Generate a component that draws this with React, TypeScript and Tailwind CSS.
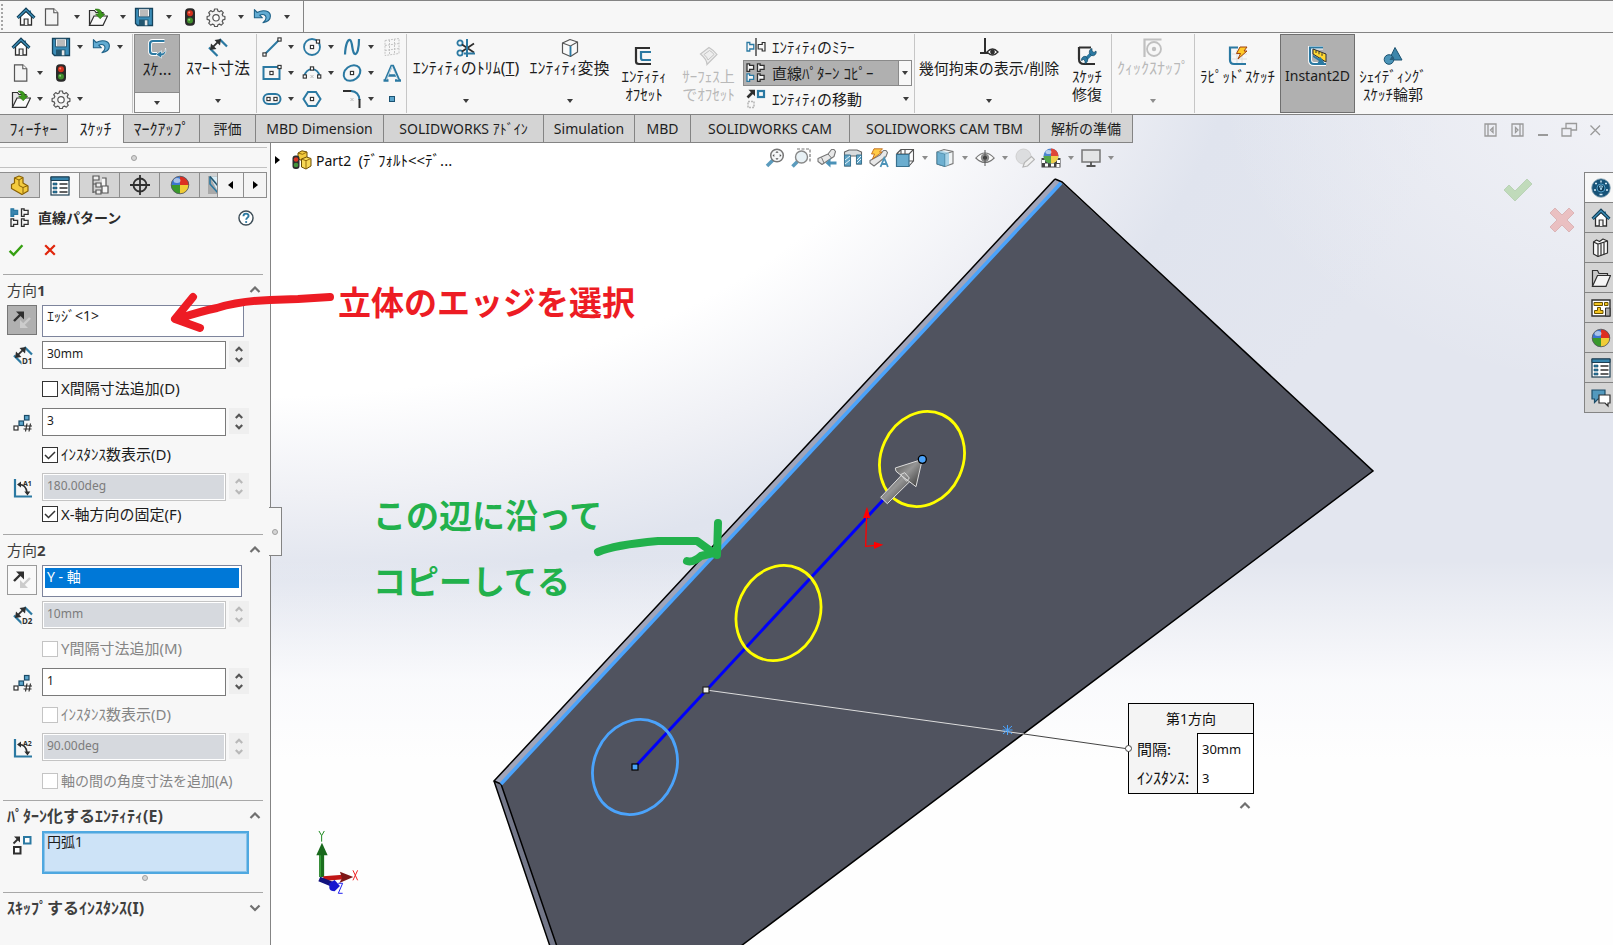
import React, { useId } from "react";

type Kids = { children?: React.ReactNode };

/* ---------- icon primitives ---------- */

function Ic({ children, size = "size-5" }: Kids & { size?: string }) {
  return (
    <svg viewBox="0 0 20 20" className={`${size} shrink-0`} fill="none" aria-hidden="true">
      {children}
    </svg>
  );
}

const B = "#2b79a2";
const K = "#2f2f2f";

const Home = () => (
  <Ic>
    <path d="M4.5 9.5V18h11V9.5L10 4.5z" fill="#fff" stroke={K} strokeWidth="1.3" />
    <path d="M8.2 18v-6h3.8v6" fill="#f2f2f2" stroke={K} strokeWidth="1.2" />
    <path d="M14.2 3.5v3" stroke={B} strokeWidth="1.6" />
    <path d="M1.6 10.8 10 2.6l8.4 8.2" stroke="#123f58" strokeWidth="3.2" />
    <path d="M2 10.6 10 2.9l8 7.7" stroke="#3f93bd" strokeWidth="1.3" />
  </Ic>
);
const Doc = () => (
  <Ic>
    <path d="M3.5 1.8h8.3l4 4v12.4H3.5z" fill="#f4f4f4" stroke="#555" strokeWidth="1.2" />
    <path d="M11.8 1.8v4h4" fill="#fff" stroke="#555" strokeWidth="1.1" />
  </Ic>
);
const OpenFolder = () => (
  <Ic>
    <path d="M1.5 18V3.5h5l1.5 2h7V8" fill="#e6e6e6" stroke={K} strokeWidth="1.2" />
    <path d="M1.5 18.3 6 9h13.5L15 18.3z" fill="#fafafa" stroke={K} strokeWidth="1.2" />
    <path d="M7 2.2c4-.6 6.8.8 7.2 4.8h2.6l-4.6 4.8L7.6 7h2.8c.2-2-1-3.4-3.4-4.8z" fill="#3c9a1c" stroke="#246b0c" strokeWidth=".6" />
  </Ic>
);
const Save = () => (
  <Ic>
    <path d="M1.5 1.5h17v17h-15l-2-2z" fill="#3b8db8" stroke="#16435c" strokeWidth="1.3" />
    <path d="M4.5 1.8h11v8h-11z" fill="#f5f5f5" stroke="#16435c" strokeWidth=".8" />
    <path d="M6 4h8M6 6h8M6 8h8" stroke="#777" strokeWidth=".9" />
    <path d="M5 12.5h9.5v6H5z" fill="#23566f" />
    <path d="M10.8 13.3h2.6v5h-2.6z" fill="#e8e8e8" />
  </Ic>
);
const Traffic = () => (
  <Ic>
    <rect x="5" y="1.3" width="10" height="17.4" rx="4" fill="#2a2a2a" />
    <circle cx="10" cy="6.2" r="3" fill="#d2301d" />
    <circle cx="9.2" cy="5.4" r="1" fill="#ff8a76" />
    <circle cx="10" cy="13.6" r="3" fill="#3f8d2c" />
    <circle cx="9.2" cy="12.8" r="1" fill="#9ad486" />
  </Ic>
);
const Gear = () => (
  <Ic>
    <path
      d="M8.6 2h2.8l.5 2 1.6.7 1.8-1.1 2 2-1.1 1.8.7 1.6 2 .5v2.8l-2 .5-.7 1.6 1.1 1.8-2 2-1.8-1.1-1.6.7-.5 1.7H8.6l-.5-1.7-1.6-.7-1.8 1.1-2-2 1.1-1.8-.7-1.6-2-.5V9.5l2-.5.7-1.6-1.1-1.8 2-2 1.8 1.1L8.1 4z"
      fill="#f4f4f4" stroke="#555" strokeWidth="1.2" strokeLinejoin="round" />
    <circle cx="10" cy="10.8" r="3.2" fill="#fff" stroke="#555" strokeWidth="1.2" />
  </Ic>
);
const Undo = () => (
  <Ic>
    <path d="M2.4 2.6v8.2h8L7.7 8.2c3-1.6 6.6-.3 6.3 2.8-.1 1.9-1.3 3.4-3 4.6 4.2-.6 7.4-3 7.4-6.6C18.4 4 11.4 2 5.2 5.5z" fill="#62abd2" stroke="#1f6288" strokeWidth="1.1" strokeLinejoin="round" />
  </Ic>
);
const SketchIc = () => (
  <Ic>
    <path d="M17.5 2H6Q3 2 3 5v7q0 3 3 3h4" stroke="#fff" strokeWidth="4" />
    <path d="M17.5 2H6Q3 2 3 5v7q0 3 3 3h4" stroke={B} strokeWidth="2.2" />
    <path d="M18.5 9c0 3.5-1.5 5-4 5.2v-2.5L9 15.5l5.5 3.7v-2.4c3.5-.5 5-3.5 4-7.8z" fill={B} stroke="#fff" strokeWidth=".6" />
  </Ic>
);
const Dim = ({ tag }: { tag?: string }) => (
  <Ic>
    <path d="M1 9.5 9.5 18M11.5 1 19 8.5" stroke={B} strokeWidth="2.2" />
    <path d="M4 9.8 11 2.8" stroke={K} strokeWidth="1.8" />
    <path d="M2 12l1-6.5 5.5 5.5zM13 1l-6.5 1L12 7.5z" fill={K} />
    {tag && <rect x="8.5" y="10.5" width="11.5" height="9" fill="#f7f7f7" />}
    {tag && <text x="9" y="18" fontSize="8" fontWeight="700" fill={K}>{tag}</text>}
  </Ic>
);
const Dot = ({ x, y }: { x: number; y: number }) => (
  <rect x={x - 1.6} y={y - 1.6} width="3.2" height="3.2" fill="#fff" stroke={K} strokeWidth="1.1" />
);
const LineIc = () => <Ic><path d="M2.5 17.5 17.5 2.5" stroke={B} strokeWidth="2" /><Dot x={2.5} y={17.5} /><Dot x={17.5} y={2.5} /></Ic>;
const CircleIc = () => <Ic><circle cx="10" cy="10" r="8" stroke={B} strokeWidth="1.8" /><Dot x={10} y={10} /><Dot x={16} y={4.5} /></Ic>;
const SplineIc = () => <Ic><path d="M3 17.5C3.5 7 6 2 8 3c3 1.5 1.5 13 5 14 2.5.5 4-6 4-15" stroke={B} strokeWidth="2.2" /></Ic>;
const PlaneIc = () => (
  <Ic><path d="M3 3.5 17 1.5v15L3 18.5zM7.5 3v15M12.5 2v15M3 8.5 17 6.5M3 13.5 17 11.5" stroke="#c4c4c4" strokeWidth="1" strokeDasharray="2 1" /></Ic>
);
const RectIc = () => <Ic><rect x="1.5" y="4" width="16" height="12" stroke={B} strokeWidth="2" /><Dot x={9.5} y={10} /><Dot x={17.5} y={4} /></Ic>;
const ArcIc = () => <Ic><path d="M2.5 13C4 4 16 4 17.5 13" stroke={B} strokeWidth="2" /><Dot x={10} y={5.5} /><Dot x={2.8} y={13.5} /><Dot x={17.2} y={13.5} /><path d="m8.5 12 3 3m0-3-3 3" stroke="#bbb" /></Ic>;
const EllipseIc = () => <Ic><ellipse cx="10" cy="10" rx="9" ry="7" transform="rotate(-38 10 10)" stroke={B} strokeWidth="2" /><Dot x={10} y={10} /></Ic>;
const TextIc = () => (
  <Ic>
    <path d="m3.5 17 6-14h1.5l6 14M6.5 12.5h7.5M1.5 17.5h5M13 17.5h6" stroke={B} strokeWidth="2.4" />
    <path d="m4.5 16.5 5.5-13 6 13.5" stroke="#fff" strokeWidth=".7" />
  </Ic>
);
const SlotIc = () => <Ic><rect x="1.5" y="5" width="17" height="10" rx="5" stroke={B} strokeWidth="2" /><Dot x={6.5} y={10} /><Dot x={13.5} y={10} /></Ic>;
const HexIc = () => <Ic><path d="M6 3h8l4.5 7-4.5 7H6l-4.5-7z" stroke={B} strokeWidth="2" /><Dot x={10} y={10} /></Ic>;
const FilletIc = () => <Ic><path d="M1 2h9" stroke={K} strokeWidth="2" /><path d="M9 2q8 .5 8.5 9" stroke={B} strokeWidth="2" /><path d="M17.5 10v9" stroke={K} strokeWidth="2" /><path d="m8.5 9 3 3m0-3-3 3" stroke="#bbb" /></Ic>;
const PointIc = () => <Ic><rect x="7.5" y="7.5" width="5" height="5" fill="#5ba5cb" stroke="#1b5373" /></Ic>;
const TrimIc = () => (
  <Ic>
    <circle cx="4" cy="5" r="2.6" stroke={B} strokeWidth="1.8" /><circle cx="4" cy="15" r="2.6" stroke={B} strokeWidth="1.8" />
    <path d="M6 6.5 18 14.5M6 13.5 18 5.5" stroke={K} strokeWidth="1.8" />
    <path d="M11 1v18M8 15.5h11" stroke={B} strokeWidth="2" />
  </Ic>
);
const CubeIc = () => (
  <Ic>
    <path d="M2.5 5 10 1.5 17.5 4v10L10.5 18.5 2.5 15z" fill="#fafafa" stroke="#555" strokeWidth="1.2" strokeLinejoin="round" />
    <path d="m2.5 5 8 3 7-4M10.5 8v10.5" stroke="#555" strokeWidth="1.1" /><path d="M10.5 8v10" stroke={B} strokeWidth="1.8" />
  </Ic>
);
const OffsetIc = () => <Ic><path d="M16 2H2v13.5q0 2.5 3 2.5h12" stroke={K} strokeWidth="2.2" /><path d="M17 6H7v6q0 2 2 2h8" stroke={B} strokeWidth="2.2" /></Ic>;
const SurfIc = () => <Ic><path d="M1.5 8 10 1.5q5 3 8 7L8 18.5q0-5-6.5-10.5z" fill="#eee" stroke="#c4c4c4" strokeWidth="1.2" /><path d="M5 8.5 10.5 4.5q3 1.5 4.5 4l-6 5.5q-1-3-4-5.5z" stroke="#c4c4c4" /></Ic>;
const cShape = "M1 1h2.8v2h4v4.5h-4v2H1z";
const MirrorIc = () => (
  <Ic><path d={cShape} transform="translate(0 4.5)" stroke={B} strokeWidth="1.3" /><path d={cShape} transform="matrix(-1 0 0 1 20 4.5)" stroke={K} strokeWidth="1.2" /><path d="M10 1v18" stroke={K} strokeWidth="1.3" /></Ic>
);
const PatIc = ({ fill }: { fill?: boolean }) => (
  <Ic>
    {[[0, 0], [10.5, 0], [0, 10], [10.5, 10]].map(([x, y], i) => {
      const hot = fill ? i === 0 : i === 2;
      return <path key={i} d="M1 .8h2.6v1.6h4v4h-4V8.4H1z" transform={`translate(${x} ${y})`} fill={fill && hot ? "#3a86b0" : "#f7f7f7"} stroke={hot ? B : K} strokeWidth="1.3" />;
    })}
  </Ic>
);
const MoveIc = () => (
  <Ic><path d="m1.5 8.5 6-6" stroke={K} strokeWidth="2.6" /><path d="M2.5.8H9v6.5z" fill={K} /><rect x="12" y="2" width="6" height="6" stroke={B} strokeWidth="2.2" /><rect x="2" y="12.5" width="6" height="6" stroke="#b8b8b8" strokeWidth="1.6" strokeDasharray="2 1" /></Ic>
);
const SeedIc = () => (
  <Ic><path d="m1.5 8.5 5-5" stroke={K} strokeWidth="1.8" /><path d="M2 1.5h6v6z" fill={K} /><rect x="12" y="2" width="6.5" height="6.5" fill="#fff" stroke={B} strokeWidth="2" /><rect x="2" y="12" width="6.5" height="6.5" fill="#fff" stroke={K} strokeWidth="2" /></Ic>
);
const RelIc = () => (
  <Ic><path d="M6 0v15M1 15h9" stroke={K} strokeWidth="2" /><path d="M8 14q5.5-6 11 0-5.5 6-11 0z" fill="#fff" stroke={K} strokeWidth="1.3" /><circle cx="13.5" cy="14" r="2.4" fill={K} /></Ic>
);
const RepairIc = () => (
  <Ic><path d="M2 1.5h12M2 1v12q0 5 5 5h11" stroke={K} strokeWidth="2.2" /><path d="m8 14 7.5-7.5" stroke={B} strokeWidth="3.2" /><path d="M13 8a3.5 3.5 0 0 1 2-5.5v2.5l2 1.5 2-1.5a3.5 3.5 0 0 1-4.5 4.5zM10 12a3.5 3.5 0 0 1-2 5.5v-2.5l-1.5-1.5-2 1A3.5 3.5 0 0 1 9 10.5z" fill={B} stroke="#174a66" strokeWidth=".7" /></Ic>
);
const SnapIc = () => <Ic><path d="M1.5 19V1.5h17" stroke="#c0c0c0" strokeWidth="2.2" /><circle cx="11" cy="11" r="7" stroke="#c0c0c0" strokeWidth="1.8" /><circle cx="11" cy="11" r="2.2" fill="#c0c0c0" /></Ic>;
const RapidIc = () => (
  <Ic>
    <path d="M4 8h15M4 13h15M9 4v14M14 4v14" stroke="#ddd" />
    <path d="M10 1.5H2V14q0 4 4 4h12" stroke={B} strokeWidth="2.2" />
    <path d="M12 1h7l-3 4h3l-9 8 2.5-5.5H8.5z" fill="#ffc928" stroke="#a0410d" strokeWidth="1" strokeLinejoin="round" />
  </Ic>
);
const InstantIc = () => (
  <Ic><path d="M15 1.5H2V14q0 4 4 4h12" stroke="#fff" strokeWidth="4" /><path d="M15 1.5H2V14q0 4 4 4h12" stroke={B} strokeWidth="2.2" /><path d="m5 3 13 5v8L5 8z" fill="#ffd731" stroke={K} /><path d="m8 4.5v2.5m3-1.2v2.5m3-1v2.5" stroke={K} /><path d="m5 9 6 3.5 1.5-1.5 4.5 7-7.5-1 1.5-2L5 11z" fill={B} /></Ic>
);
const ShadeIc = () => <Ic><path d="M12 1.5 19 14H6z" fill="#3d86ab" stroke="#1c5270" /><circle cx="6" cy="13.5" r="4.8" fill="#4b94b8" stroke="#1c5270" /><path d="M9 9.7A4.8 4.8 0 0 1 10.8 14H6.5z" fill="#2a5f7d" /></Ic>;

const PartIc = () => (
  <Ic><path d="m1.5 9.5 3-1.5V3l4.5-2 4 1.5v5.5l5 3v5l-6 3.5-10.5-6z" fill="#f3cb3e" stroke="#8a6206" strokeWidth="1.2" strokeLinejoin="round" /><path d="m4.5 3 4.5 2 4-2.5M9 5v5.5l4 2 5-2M13 12.5V18" stroke="#8a6206" strokeWidth="1" /></Ic>
);
const TreePartIc = () => (
  <Ic>
    <path d="m6 3 4-2.2 5 1.2v6L10 10.5 6 9z" fill="#f3cb3e" stroke="#6b4d06" strokeWidth="1" strokeLinejoin="round" />
    <path d="m9.5 9 5-2 4.5 1.5v7.5l-5 3-4.5-2z" fill="#f7d856" stroke="#6b4d06" strokeWidth="1" strokeLinejoin="round" />
    <path d="m6 3 4.5 1.3L15 2M9.5 9l4.5 1.7 5-2.2M14 10.7V19" stroke="#8a6206" strokeWidth=".9" />
    <rect x=".5" y="5.5" width="7" height="13.5" rx="3" fill="#2d2d2d" />
    <circle cx="4" cy="9.5" r="2.3" fill="#dc3522" /><circle cx="4" cy="15" r="2.3" fill="#44953a" />
  </Ic>
);
const PropIc = () => (
  <Ic><rect x="1" y="1" width="18" height="18" fill="#fff" stroke="#1d3e52" strokeWidth="1.2" /><path d="M1 1h18v3.5H1z" fill="#3784ac" stroke="#1d3e52" strokeWidth="1" /><path d="M3 7h4v2H3zM3 11h4v2H3zM3 15h4v2H3z" fill={B} stroke="#174a66" strokeWidth=".6" /><path d="M9.5 8h8M9.5 12h8M9.5 16h8" stroke={K} strokeWidth="1.3" /></Ic>
);
const ConfIc = () => (
  <Ic><path d="M3 1h6v4H3zM3 5v13M3 9h3M3 17h3M6 8h5v4H6zM6 15h5v4H6z" stroke="#555" strokeWidth="1.2" fill="#eee" /><path d="M12 3h4v8h-4M12 11h6v7h-6z" stroke="#555" strokeWidth="1.2" fill="#f7f7f7" /></Ic>
);
const TargetIc = () => <Ic><circle cx="10" cy="10" r="6.5" stroke={K} strokeWidth="1.8" /><path d="M10 0v20M0 10h20" stroke={K} strokeWidth="1.8" /></Ic>;
const Ball = () => (
  <Ic>
    <circle cx="10" cy="10" r="8.8" fill="#3c75d0" /><path d="M10 10V1.2A8.8 8.8 0 0 1 18.8 10z" fill="#dc2f22" /><path d="M10 10h8.8A8.8 8.8 0 0 1 10 18.8z" fill="#f0cc35" /><path d="M10 10v8.8A8.8 8.8 0 0 1 1.2 10z" fill="#39982b" />
    <ellipse cx="7" cy="5.5" rx="3.5" ry="2.5" fill="#fff" opacity=".55" /><circle cx="10" cy="10" r="8.8" stroke="#555" strokeWidth=".8" />
  </Ic>
);
const HelpIc = () => <Ic size="size-4"><circle cx="10" cy="10" r="8.8" fill="#fff" stroke="#3d4d57" strokeWidth="1.8" /><path d="M6.8 7.8c.2-4.5 6.6-4 6.4-.3-.1 2-3 2.2-3 4.7" stroke={B} strokeWidth="2.4" /><circle cx="10.2" cy="15" r="1.4" fill={B} /></Ic>;
const OkIc = () => <Ic size="size-4"><path d="m2 11 5 5L18 4" stroke="#36a012" strokeWidth="3" /></Ic>;
const NoIc = () => <Ic size="size-4"><path d="m4 4 12 12M16 4 4 16" stroke="#e0260c" strokeWidth="2.8" /></Ic>;
const RevIc = () => (
  <Ic><path d="m2 11 7-7" stroke={K} strokeWidth="2.4" /><path d="M4 1.5h8v8z" fill={K} /><path d="m18 8-7 7" stroke="#ccc" strokeWidth="2.4" /><path d="M16 18H8v-8z" fill="#ccc" /></Ic>
);
const CountIc = () => (
  <Ic><rect x="1" y="13" width="4" height="4" fill="#fff" stroke={K} strokeWidth="1.2" /><rect x="6" y="8" width="4.5" height="4.5" fill="#5ba5cb" stroke="#1b4a66" strokeWidth="1.2" /><rect x="11.5" y="2.5" width="4.5" height="4.5" fill="#5ba5cb" stroke="#1b4a66" strokeWidth="1.2" /><path d="m14 10.5-1.5 8m5-8-1.5 8M11 13h8m-8.5 3h8" stroke={K} strokeWidth="1.2" /></Ic>
);
const AngIc = ({ tag }: { tag: string }) => (
  <Ic><path d="M2 1v17.5h17" stroke={B} strokeWidth="2.2" /><path d="M6 6.5q7 0 8 8" stroke={K} strokeWidth="1.6" /><path d="m4 6.5 4-3v6zM14.5 17.5l-3.2-4h6z" fill={K} /><text x="10" y="7.5" fontSize="7" fontWeight="700" fill={K}>{tag}</text></Ic>
);

const ZoomFit = () => <Ic><path d="m2 18 6-6" stroke="#5b9bbd" strokeWidth="3.6" /><circle cx="12" cy="7.5" r="6.3" fill="#f5f7f8" stroke="#777" strokeWidth="1.5" /><path d="m12 3 1.6 1.8h-3.2zM12 12l1.6-1.8h-3.2zM7.5 7.5l1.8-1.6v3.2zM16.5 7.5l-1.8-1.6v3.2z" fill="#555" /></Ic>;
const ZoomArea = () => <Ic><path d="M6 1h13v13" stroke="#777" strokeWidth="1.2" strokeDasharray="3 1.5" /><path d="m1.5 18.5 5-5" stroke="#5b9bbd" strokeWidth="3.6" /><circle cx="10.5" cy="9" r="6" fill="#e8f1f5" stroke="#888" strokeWidth="1.4" /></Ic>;
const PrevView = () => (
  <Ic>
    <path d="M1 13.5v-3L11 6l3.5-4.5h2.5l1.5 2-1.5 5L5 16.5z" fill="#e8e8e8" stroke="#777" strokeWidth="1.1" strokeLinejoin="round" />
    <path d="m4.5 9.5 2.5 5.5M11 6l3.5 4" stroke="#777" />
    <path d="M12 15h7.5" stroke="#4a92b8" strokeWidth="3" /><path d="m8.5 15 5-4.5v9z" fill="#4a92b8" />
  </Ic>
);
const SectionIc = () => <Ic><path d="M1.5 4 6 2h8l4.5 2v12h-5V8h-6v10h-6z" fill="#d9dcde" stroke="#666" strokeWidth="1.1" /><path d="M1.5 7h6v11h-6zM13.5 7h5v9h-5z" fill="#5fa3c5" stroke="#3d7592" /><path d="m2 12 5-4M2 16l5-4m7 0 4-4m-4 7 4-4" stroke="#e5f3fa" /></Ic>;
const DynIc = () => (
  <Ic>
    <path d="M1 15v-2.5L11 7l3.5-4.5H17l1.5 2-1.5 4L5 18z" fill="#e8e8e8" stroke="#777" strokeWidth="1.1" strokeLinejoin="round" />
    <path d="M5 .8h8.5L10.5 4H13L3.5 11l2-5H2.5z" fill="#ffca45" stroke="#bf6a1a" strokeWidth=".9" />
    <path d="m11.5 19 3.7-9 3.7 9M12.5 16h5.5" stroke="#4c93b8" strokeWidth="1.8" />
  </Ic>
);
const OrientIc = () => <Ic><path d="M6 1.5h12.5V13H6zM1.5 6 6 1.5M14 6l4.5-4.5M14 18l4.5-5M10 1.5v11M1.5 6H14" stroke="#555" strokeWidth="1.1" /><path d="M1.5 6.5H14V18.5H1.5z" fill="#6badcf" stroke="#39718f" strokeWidth="1.2" /></Ic>;
const StyleIc = () => <Ic><path d="M2 4 9 1.5 18 3.5v12L10 18.5 2 16z" fill="#f0f3f4" stroke="#777" strokeWidth="1.1" /><path d="M2 4 10 6v12.5L2 16z" fill="#6eb0d1" stroke="#47839f" /><path d="m10 6 8-2.5" stroke="#777" /><path d="M6 2.7 14 4.8V17l-4 1.5V6L2 4z" fill="#8cc4df" opacity=".7" /></Ic>;
const EyeIc = () => <Ic><path d="M.8 10q9.2-10 18.4 0-9.2 9-18.4 0z" fill="#fafafa" stroke="#777" strokeWidth="1.1" /><circle cx="10" cy="9.8" r="4.2" fill="#8a8a8a" /><circle cx="10" cy="9.8" r="2" fill="#333" /><path d="M10 2v16" stroke="#555" /></Ic>;
const EditApp = () => <Ic><circle cx="8.5" cy="8.5" r="7.5" fill="#dcdddf" stroke="#d0d0d0" /><path d="m8 19 1.5-4.5 7-6 3 3-7 6.5z" fill="#f0f0f0" stroke="#b5b5b5" strokeWidth="1.2" /></Ic>;
const SceneIc = () => (
  <Ic><path d="M.5 10h19v9.5H.5z" fill="#444" /><path d="M1 12h3v3H1zM16 12h3v3h-3zM4 15.5h3v3H4zM10 15.5h3v3h-3zM15.5 16h3v3h-3z" fill="#fff" /><circle cx="10" cy="8" r="7.5" fill="#4c85cf" /><path d="M10 8V.5A7.5 7.5 0 0 1 17.5 8z" fill="#de4637" /><path d="M10 8h7.5a7.5 7.5 0 0 1-7.5 7.5z" fill="#efcf4b" /><path d="M10 8v7.5A7.5 7.5 0 0 1 2.5 8z" fill="#55a748" /><ellipse cx="7.5" cy="4" rx="3" ry="2" fill="#fff" opacity=".6" /></Ic>
);
const Monitor = () => <Ic><path d="M1 2h18v12H1z" fill="#e4e5e6" stroke="#777" strokeWidth="1.5" /><path d="M10 14v3.5M5.5 18h9" stroke="#555" strokeWidth="1.8" /></Ic>;

const SwIc = () => <Ic><circle cx="10" cy="10" r="9.3" fill="#175378" stroke="#8fa9b8" strokeWidth=".8" /><circle cx="10" cy="10" r="4" fill="#0d3c5a" stroke="#4d9cc6" /><path d="M8.5 8h3l-1.5 4z" stroke="#a6d4ec" /><path d="M4 5.5h2M14 5.5h2M3 12h2M15 12h2M10 2.5v2M8.5 16.5h3" stroke="#d3eaf5" strokeWidth="1.4" /></Ic>;
const Books = () => <Ic><path d="m2.5 4 3-2 3 1.5L12 1l4.5 2v12L7 18.5 2.5 16z" fill="#fafafa" stroke={K} strokeWidth="1.2" strokeLinejoin="round" /><path d="M2.5 4 7 6l9.5-3M7 6v12.5M10 5v12.5M13 4v12.5" stroke={K} strokeWidth="1.2" /></Ic>;
const Folder = () => <Ic><path d="M1.5 18V2.5h5l1.5 3h8.5V8" fill="#c9c9c9" stroke={K} strokeWidth="1.2" /><path d="M1.5 18.3 6.5 7.5h13L15 18.3z" fill="#f5f5f5" stroke={K} strokeWidth="1.2" /></Ic>;
const Palette = () => <Ic><path d="M1 2h18v16H1z" fill="#fff" stroke={K} strokeWidth="1.4" /><path d="M3 4.5h8.5v3H3zM13.5 4.5H17v3h-3.5zM6.5 9.5h3v3h2.5v3H3.5v-3h3z" fill="#f4c51e" stroke="#6a5200" /><path d="M14.5 10H19v8h-4.5z" fill="#aaa" stroke={K} /></Ic>;
const Forum = () => <Ic><path d="M1 2h13v9H7l-3.5 3.5V11H1z" fill="#5299be" stroke="#1d4d68" strokeWidth="1.2" /><path d="M8 7h11v8h-2v3l-3-3H8z" fill="#fff" stroke={K} strokeWidth="1.2" /></Ic>;

/* ---------- small shared pieces ---------- */

function Caret({ muted }: { muted?: boolean }) {
  return <svg viewBox="0 0 6 4" className={`h-1 w-1.5 shrink-0 ${muted ? "fill-[#8d8d8d]" : "fill-[#3c3c3c]"}`} aria-hidden="true"><path d="M0 0h6L3 4z" /></svg>;
}
function Chevron({ down }: { down?: boolean }) {
  return (
    <svg viewBox="0 0 12 8" className="h-2 w-3 shrink-0" fill="none" aria-hidden="true">
      <path d={down ? "M1.5 1.5 6 6l4.5-4.5" : "M1.5 6 6 1.5 10.5 6"} stroke="#707070" strokeWidth="2.2" />
    </svg>
  );
}
function SpinMark({ down, light }: { down?: boolean; light?: boolean }) {
  return (
    <svg viewBox="0 0 8 6" className="h-1.5 w-2 shrink-0" fill="none" aria-hidden="true">
      <path d={down ? "M.8 1 4 4.2 7.2 1" : "M.8 5 4 1.8 7.2 5"} stroke={light ? "#b8b8b8" : "#555"} strokeWidth="2.2" />
    </svg>
  );
}
const Sep = () => <div className="w-px shrink-0 self-stretch bg-[#c6c6c6]" />;

function IconCell({ icon, caret, label, wide }: { icon?: React.ReactNode; caret?: boolean; label: string; wide?: boolean }) {
  return (
    <div className={`flex h-[26px] items-center ${wide ? "w-[46px] gap-1.5" : "w-10"}`}>
      {icon && <button type="button" aria-label={label} className="grid size-[26px] shrink-0 place-items-center">{icon}</button>}
      {caret && <button type="button" aria-label={`${label} ▾`} className="grid h-[26px] w-3 place-items-center"><Caret /></button>}
    </div>
  );
}

function BigButton({ icon, lines, w, caret, low, muted, size = "text-[16px]" }: {
  icon: React.ReactNode; lines: React.ReactNode[]; w: string; caret?: boolean; low?: boolean; muted?: boolean; size?: string;
}) {
  return (
    <button type="button" className={`flex shrink-0 flex-col items-center ${w} ${low ? "pt-3" : "pt-1"} ${muted ? "text-[#b9b9b9]" : "text-[#1c1c1c]"}`}>
      {icon}
      <span className={`flex flex-col items-center whitespace-nowrap leading-[18px] ${size}`}>
        {lines.map((l, i) => <span key={i} className={i === 0 ? "pt-px" : ""}>{l}</span>)}
      </span>
      {caret && <span className="mt-auto flex h-6 items-center"><Caret muted={muted} /></span>}
    </button>
  );
}

/* ---------- bars ---------- */

function QuickBar() {
  return (
    <header className="flex h-[33px] border-y border-[#848484] bg-[#f7f7f7]">
      <div className="flex items-center border-r border-[#848484] pr-2">
        <div className="ml-px mr-2 h-[26px] w-1 border-l-2 border-dotted border-[#a5a5a5]" />
        <button type="button" aria-label="ホーム" className="grid size-[26px] place-items-center"><Home /></button>
        <IconCell icon={<Doc />} caret wide label="新規" />
        <IconCell icon={<OpenFolder />} caret wide label="開く" />
        <IconCell icon={<Save />} caret wide label="保存" />
        <button type="button" aria-label="再構築" className="grid size-[26px] place-items-center"><Traffic /></button>
        <IconCell icon={<Gear />} caret wide label="オプション" />
        <IconCell icon={<Undo />} caret wide label="元に戻す" />
      </div>
    </header>
  );
}

function Ribbon() {
  return (
    <div className="flex h-[82px] shrink-0 overflow-hidden border-b border-[#848484] bg-[#f7f7f7] py-px">
      <div className="grid w-[132px] shrink-0 grid-cols-[40px_40px_40px] content-start pl-2">
        <IconCell icon={<Home />} label="ホーム" />
        <IconCell icon={<Save />} caret label="保存" />
        <IconCell icon={<Undo />} caret label="元に戻す" />
        <IconCell icon={<Doc />} caret label="新規" />
        <IconCell icon={<Traffic />} label="再構築" />
        <span />
        <IconCell icon={<OpenFolder />} caret label="開く" />
        <IconCell icon={<Gear />} caret label="オプション" />
      </div>
      <Sep />
      <div className="ml-px flex w-[46px] shrink-0 flex-col border border-[#8a8a8a]">
        <button type="button" className="flex flex-1 flex-col items-center border-b border-[#8a8a8a] bg-[#b0b0b0] pt-1 text-[16px] leading-5 text-[#1c1c1c]">
          <SketchIc />ｽｹ...
        </button>
        <button type="button" aria-label="スケッチ ▾" className="grid h-[19px] place-items-center bg-[#f8f8f8]"><Caret /></button>
      </div>
      <BigButton icon={<Dim />} lines={["ｽﾏｰﾄ寸法"]} w="w-[76px]" caret />
      <Sep />
      <div className="grid w-[149px] shrink-0 grid-cols-[40px_40px_40px_26px] content-start pl-0.5">
        <IconCell icon={<LineIc />} caret label="直線" />
        <IconCell icon={<CircleIc />} caret label="円" />
        <IconCell icon={<SplineIc />} caret label="スプライン" />
        <IconCell icon={<PlaneIc />} label="平面" />
        <IconCell icon={<RectIc />} caret label="矩形" />
        <IconCell icon={<ArcIc />} caret label="円弧" />
        <IconCell icon={<EllipseIc />} caret label="楕円" />
        <IconCell icon={<TextIc />} label="テキスト" />
        <IconCell icon={<SlotIc />} caret label="スロット" />
        <IconCell icon={<HexIc />} label="多角形" />
        <IconCell icon={<FilletIc />} caret label="フィレット" />
        <IconCell icon={<PointIc />} label="点" />
      </div>
      <Sep />
      <BigButton icon={<TrimIc />} lines={[<>ｴﾝﾃｨﾃｨのﾄﾘﾑ(<u>T</u>)</>]} w="w-[118px]" caret />
      <BigButton icon={<CubeIc />} lines={["ｴﾝﾃｨﾃｨ変換"]} w="w-[89px]" caret />
      <BigButton icon={<OffsetIc />} lines={["ｴﾝﾃｨﾃｨ", "ｵﾌｾｯﾄ"]} w="w-[60px]" low size="text-[15px]" />
      <BigButton icon={<SurfIc />} lines={["ｻｰﾌｪｽ上", "でｵﾌｾｯﾄ"]} w="w-[69px]" low muted size="text-[15px]" />
      <div className="flex w-[169px] shrink-0 flex-col text-[15px] text-[#1c1c1c]">
        <button type="button" className="flex h-[26px] items-center gap-1.5 pl-[3px]"><MirrorIc />ｴﾝﾃｨﾃｨのﾐﾗｰ</button>
        <div className="flex h-[26px] border border-[#8a8a8a]">
          <button type="button" className="flex flex-1 items-center gap-1.5 border-r border-[#8a8a8a] bg-[#b0b0b0] pl-0.5"><PatIc />直線ﾊﾟﾀｰﾝ ｺﾋﾟｰ</button>
          <button type="button" aria-label="直線パターン ▾" className="grid w-3 place-items-center"><Caret /></button>
        </div>
        <div className="flex h-[26px] items-center">
          <button type="button" className="flex flex-1 items-center gap-1.5 pl-[3px]"><MoveIc />ｴﾝﾃｨﾃｨの移動</button>
          <button type="button" aria-label="移動 ▾" className="grid w-3 place-items-center"><Caret /></button>
        </div>
      </div>
      <div className="w-0.5" />
      <Sep />
      <BigButton icon={<RelIc />} lines={["幾何拘束の表示/削除"]} w="w-[148px]" caret size="text-[15px]" />
      <BigButton icon={<RepairIc />} lines={["ｽｹｯﾁ", "修復"]} w="w-[48px]" low size="text-[15px]" />
      <Sep />
      <BigButton icon={<SnapIc />} lines={["ｸｨｯｸｽﾅｯﾌﾟ"]} w="w-[82px]" caret muted />
      <Sep />
      <BigButton icon={<RapidIc />} lines={["ﾗﾋﾟｯﾄﾞｽｹｯﾁ"]} w="w-[85px]" low size="text-[15px]" />
      <button type="button" className="flex w-[75px] shrink-0 flex-col items-center border border-[#6f6f6f] bg-[#b0b0b0] pt-[11px] text-[14px] leading-5 text-[#1c1c1c]">
        <InstantIc />Instant2D
      </button>
      <BigButton icon={<ShadeIc />} lines={["ｼｪｲﾃﾞｨﾝｸﾞ", "ｽｹｯﾁ輪郭"]} w="w-[76px]" low size="text-[15px]" />
    </div>
  );
}

const TABS: { t: string; c: string }[] = [
  { t: "ﾌｨｰﾁｬｰ", c: "w-[68px] text-[16px]" },
  { t: "ｽｹｯﾁ", c: "w-[56px] text-[16px]" },
  { t: "ﾏｰｸｱｯﾌﾟ", c: "w-[76px] text-[16px]" },
  { t: "評価", c: "w-[56px] text-[14px]" },
  { t: "MBD Dimension", c: "w-[128px] text-[14px]" },
  { t: "SOLIDWORKS ｱﾄﾞｲﾝ", c: "w-[160px] text-[14px]" },
  { t: "Simulation", c: "w-[91px] text-[14px]" },
  { t: "MBD", c: "w-[56px] text-[14px]" },
  { t: "SOLIDWORKS CAM", c: "w-[159px] text-[14px]" },
  { t: "SOLIDWORKS CAM TBM", c: "w-[190px] text-[14px]" },
  { t: "解析の準備", c: "w-[93px] text-[14px]" },
];

function TabRow() {
  return (
    <div className="relative flex h-7 shrink-0 items-stretch">
      <div role="tablist" className="flex">
        {TABS.map(({ t, c }, i) => (
          <button key={t} type="button" role="tab" aria-selected={i === 1}
            className={`whitespace-nowrap border-r border-[#848484] leading-5 text-[#1e1e1e] ${i === 1 ? "bg-[#f7f7f7]" : "border-b bg-[#d4d4d4]"} ${c}`}>
            {t}
          </button>
        ))}
      </div>
      <div className="ml-auto flex items-center pr-[5px] pt-0.5 text-[#9a9a9a]">
        {[
          "M4 4h11v12H4zM7 4v12M12 7.5 9.5 10l2.5 2.5z",
          "M5 4h11v12H5zM13 4v12M8.5 7.5 11 10l-2.5 2.5z",
          "M5 15h10",
          "M7 8V3.5h10.5V10H12M3 8.5h9V16H3z",
          "m5.5 5.5 9.5 9.5M15 5.5 5.5 15",
        ].map((d, i) => (
          <button key={i} type="button" aria-label={["前", "次", "最小化", "元のサイズに戻す", "閉じる"][i]} className="grid size-[26px] place-items-center">
            <Ic><path d={d} stroke="currentColor" strokeWidth={i === 2 ? 2 : 1.3} /></Ic>
          </button>
        ))}
      </div>
    </div>
  );
}

/* ---------- property panel ---------- */

function Section({ title, name, closed, big, children }: Kids & { title: React.ReactNode; name: string; closed?: boolean; big?: boolean }) {
  return (
    <section className="ml-[3px] mr-[7px] border-t border-[#a8a8a8]">
      <h3 className={`flex h-[30px] items-center justify-between pl-1 pr-0.5 text-[#3f3f3f] ${big ? "text-[16px] font-bold" : "text-[15px]"}`}>
        <span>{title}</span>
        <button type="button" aria-label={name}><Chevron down={closed} /></button>
      </h3>
      {children}
    </section>
  );
}

function NumRow({ icon, value, label, disabled }: { icon: React.ReactNode; value: string; label: string; disabled?: boolean }) {
  return (
    <div className="flex h-7">
      <div className="grid w-[39px] shrink-0 place-items-center pt-0.5">{icon}</div>
      <input aria-label={label} defaultValue={value} disabled={disabled}
        className={`h-7 w-[184px] border pb-1 pl-1 text-[12px] ${disabled ? "border-[#c4c4c4] bg-[#d6d9de] text-[#7c7c7c] ring-1 ring-inset ring-white" : "border-[#7a7a7a] bg-white text-[#1c1c1c]"}`} />
      <div className="ml-[3px] flex h-[26px] w-5 flex-col items-center justify-around bg-[#efefef] py-0.5">
        <button type="button" aria-label={`${label} +`} disabled={disabled}><SpinMark light={disabled} /></button>
        <button type="button" aria-label={`${label} -`} disabled={disabled}><SpinMark down light={disabled} /></button>
      </div>
    </div>
  );
}

function Check({ label, checked, disabled, h, size = "text-[15px]" }: { label: string; checked?: boolean; disabled?: boolean; h: string; size?: string }) {
  const id = useId();
  return (
    <div className={`flex items-center pl-[39px] ${h}`}>
      <span className="relative grid size-4 place-items-center">
        <input id={id} type="checkbox" defaultChecked={checked} disabled={disabled}
          className="peer size-4 appearance-none border border-[#333] bg-white disabled:border-[#c4c4c4]" />
        <svg viewBox="0 0 16 16" className="pointer-events-none absolute size-4 opacity-0 peer-checked:opacity-100" fill="none" aria-hidden="true">
          <path d="m3 8 3.5 3.5L13 5" stroke="#333" strokeWidth="1.5" />
        </svg>
      </span>
      <label htmlFor={id} className={`whitespace-nowrap pl-[3px] ${size} ${disabled ? "text-[#858585]" : "text-[#1c1c1c]"}`}>{label}</label>
    </div>
  );
}

function Direction({ n, pick, on }: { n: 1 | 2; pick: React.ReactNode; on?: boolean }) {
  const first = n === 1;
  return (
    <Section name={`方向${n}`} title={<>方向<b>{n}</b></>}>
      <div className="mb-1 flex h-8 pl-1">
        <button type="button" aria-label="反対方向" className={`grid size-[30px] place-items-center border ${on ? "border-[#777] bg-[#b0b0b0]" : "border-[#9a9a9a] bg-[#f9f9f9]"}`}><RevIc /></button>
        <div role="listbox" aria-label={`方向${n}`} className={`ml-[5px] border border-[#7d849c] bg-white text-[14px] leading-5 ${first ? "w-[202px]" : "w-[200px]"}`}>{pick}</div>
      </div>
      <NumRow icon={<Dim tag={`D${n}`} />} value={first ? "30mm" : "10mm"} label="間隔" disabled={!first} />
      <Check label={first ? "X間隔寸法追加(D)" : "Y間隔寸法追加(M)"} disabled={!first} h="h-[39px]" />
      <NumRow icon={<CountIc />} value={first ? "3" : "1"} label="インスタンス数" />
      <Check label="ｲﾝｽﾀﾝｽ数表示(D)" checked={first} disabled={!first} h="h-[37px]" />
      <NumRow icon={<AngIc tag={`A${n}`} />} value={first ? "180.00deg" : "90.00deg"} label="角度" disabled />
      {first
        ? <div className="pb-[7px]"><Check label="X-軸方向の固定(F)" checked h="h-[26px]" /></div>
        : <Check label="軸の間の角度寸法を追加(A)" disabled h="h-[39px]" size="text-[14px]" />}
    </Section>
  );
}

const Grip = () => <span className="block size-1.5 rounded-full border border-[#a0a0a0] bg-[#d5d5d5]" />;

function Panel() {
  const tab = "grid h-[26px] shrink-0 place-items-center overflow-hidden border-r border-t border-[#8e8e8e]";
  return (
    <aside className="relative z-10 flex w-[271px] shrink-0 flex-col border-r border-[#848484] bg-[#f7f7f7]">
      <div className="mr-[3px] mt-1 grid h-[21px] place-items-center border-y border-[#c2c2c2]"><Grip /></div>
      <div className="mr-[3px] mt-1 flex">
        {[<PartIc />, <PropIc />, <ConfIc />, <TargetIc />, <Ball />].map((ic, i) => (
          <button key={i} type="button" aria-label={["FeatureManager", "PropertyManager", "ConfigurationManager", "DimXpertManager", "DisplayManager"][i]}
            className={`${tab} w-10 ${i === 1 ? "bg-[#f7f7f7]" : "border-b bg-[#d4d4d4]"}`}>{ic}</button>
        ))}
        <button type="button" aria-label="CAM" className={`${tab} w-[18px] border-b bg-[#d4d4d4]`}>
          <Ic><path d="M8 1h12v18H8z" fill="#a9a9a9" /><path d="M10 1.5h8V17z" fill="#d9edf6" /><path d="M10 1.5V9l8 9" stroke={B} strokeWidth="1.6" /><path d="M10 1.5 18 11" stroke="#23566f" strokeWidth="1.6" /></Ic>
        </button>
        <button type="button" aria-label="左" className={`${tab} w-[26px] border-b bg-[#f4f4f4]`}><svg viewBox="0 0 5 8" className="h-2 w-[5px]"><path d="M5 0v8L0 4z" /></svg></button>
        <button type="button" aria-label="右" className={`${tab} flex-1 border-b bg-[#f4f4f4]`}><svg viewBox="0 0 5 8" className="h-2 w-[5px]"><path d="M0 0v8l5-4z" /></svg></button>
      </div>
      <div className="flex h-[39px] items-center pl-2.5 pr-4">
        <PatIc fill />
        <h2 className="flex-1 pl-2 text-[14px] font-bold text-[#2c2c2c]">直線パターン</h2>
        <button type="button" aria-label="ヘルプ"><HelpIc /></button>
      </div>
      <div className="flex h-[37px] items-start gap-[18px] pl-2 pt-[5px]">
        <button type="button" aria-label="OK"><OkIc /></button>
        <button type="button" aria-label="キャンセル"><NoIc /></button>
      </div>
      <Direction n={1} on pick={<div role="option" aria-selected="false" className="pl-1 text-[#1c1c1c]">ｴｯｼﾞ&lt;1&gt;</div>} />
      <Direction n={2} pick={<div role="option" aria-selected="true" className="m-0.5 h-5 bg-[#0078d7] pl-0.5 leading-[18px] text-white">Y - 軸</div>} />
      <Section name="エンティティ" title="ﾊﾟﾀｰﾝ化するｴﾝﾃｨﾃｨ(E)" big>
        <div className="flex">
          <div className="w-[39px] pl-[9px] pt-1"><SeedIc /></div>
          <div role="listbox" aria-label="エンティティ" className="h-[43px] w-[207px] border-2 border-[#4fa8e0] bg-[#cde3f7] pl-[3px] text-[14px] leading-[18px] text-[#1c1c1c] ring-1 ring-inset ring-[#8cc4ea]">
            <div role="option" aria-selected="true">円弧1</div>
          </div>
        </div>
        <div className="grid h-[18px] justify-center pl-6 pt-px"><Grip /></div>
      </Section>
      <Section name="スキップ" title="ｽｷｯﾌﾟするｲﾝｽﾀﾝｽ(I)" closed big />
      <button type="button" aria-label="パネルを閉じる" className="absolute left-[269px] top-[364px] grid h-[49px] w-[13px] place-items-center border border-l-0 border-[#848484] bg-[#f7f7f7]"><Grip /></button>
    </aside>
  );
}

/* ---------- graphics area ---------- */

/* Model drawing, in window coordinates. */
function Model() {
  return (
    <svg className="pointer-events-none absolute inset-0 size-full" fill="none" aria-hidden="true">
      <defs>
        <linearGradient id="cone" x1=".1" y1=".1" x2=".9" y2=".9"><stop offset="0" stopColor="#5a5a5a" /><stop offset=".45" stopColor="#959595" /><stop offset="1" stopColor="#404040" /></linearGradient>
      </defs>
      <path d="m494 781 60 176h10l-63-173z" fill="#737789" />
      <path d="M1055 179 1062 183 501 784 494 781z" fill="#a0a4b9" />
      <path d="M1062 183 1373 471 721 961H562L501 784z" fill="#50535f" />
      <path d="m494 781 61 180M501 784l61 177M1055 179 494 781l7 3M1055 179l7 3 311 289-652 490" stroke="#000" strokeWidth="1.5" />
      <path d="M1061 183 501 784" stroke="#4ba3fb" strokeWidth="3.5" />
      <path d="M883 500 635 767" stroke="#0000fa" strokeWidth="3" />
      <ellipse cx="922" cy="459" rx="41" ry="48.8" transform="rotate(24.6 922 459)" stroke="#ff0" strokeWidth="2.8" />
      <ellipse cx="778.5" cy="613" rx="41" ry="48.8" transform="rotate(24.6 778.5 613)" stroke="#ff0" strokeWidth="2.8" />
      <ellipse cx="635" cy="767" rx="41" ry="48.8" transform="rotate(24.6 635 767)" stroke="#4ba3fb" strokeWidth="2.8" />
      <path d="m706 690 318 44" stroke="#ddd" />
      <path d="m1024 734 105 15" stroke="#444" />
      <path d="M1003 726l9 8m0-8-9 8m4.5-9v10m-5-5h10" stroke="#4ba3fb" />
      <rect x="632" y="764" width="6" height="6" fill="#4ba3fb" stroke="#000" strokeWidth="1.2" />
      <rect x="703" y="687" width="6" height="6" fill="#eee" stroke="#222" strokeWidth="1.2" />
      <g transform="translate(780 390) scale(.3333)">
        <path d="M302 322 368 252l22 22-68 67z" fill="url(#cone)" stroke="#ddd" strokeWidth="3" />
        <path d="M427 208 346 234q-2 10 12 18l50 38z" fill="url(#cone)" stroke="#ddd" strokeWidth="3" />
        <path d="m362 254 12-6 14 16-8 10z" stroke="#ddd" strokeWidth="3" />
        <circle cx="427" cy="208" r="12" fill="#4ba3fb" stroke="#000" strokeWidth="4" />
        <path d="M261 350l-12 34h22zM310 464l-28-9v22z" fill="#f00" />
        <path d="m260 370-3 99 40-4" stroke="#f00" strokeWidth="4" />
      </g>
      <g transform="translate(0 665) scale(.3333)">
        <path d="M965 636V565" stroke="#1b6f1e" strokeWidth="15" /><path d="M961 636V565" stroke="#38a03a" strokeWidth="4" />
        <path d="m966 533-17 38h34z" fill="#19691c" />
        <path d="m970 641 60-5" stroke="#c01616" strokeWidth="14" /><path d="m1060 636-40-16 6 20-8 14z" fill="#7e1717" />
        <path d="m958 642 40 16" stroke="#12127e" strokeWidth="15" /><path d="m988 655 16-10 16 18-16 16q-14 0-16-10z" fill="#1717cf" />
        <path d="m957 498 8 14 8-14M965 512v18" stroke="#1d8a1f" strokeWidth="3" />
        <path d="m1059 616 14 30m0-30-14 30" stroke="#f02020" strokeWidth="3" />
        <path d="M1015 655h13l-13 30h13" stroke="#2020f0" strokeWidth="3" />
      </g>
    </svg>
  );
}

/* Hand-drawn pointers laid over the whole window. */
function Pointers() {
  return (
    <svg className="pointer-events-none absolute inset-0 z-20 size-full" fill="none" strokeWidth="8" strokeLinecap="round" strokeLinejoin="round" aria-hidden="true">
      <path d="M193 297 175 319 200 328M177 319Q202 311 217 308 240 301 270 300L298 299 330 297" stroke="#ed1c24" />
      <path d="M598 552q16-7 60-11h39l18 13M718 523l-1 32M687 561q6 2 14-5l16-4" stroke="#22b14c" />
    </svg>
  );
}

function Hud() {
  const items: [React.ReactNode, boolean, string][] = [
    [<ZoomFit />, false, "ウィンドウにフィット"], [<ZoomArea />, false, "一部拡大"], [<PrevView />, false, "前の表示"], [<SectionIc />, false, "断面表示"],
    [<DynIc />, false, "動的アノテート"], [<OrientIc />, true, "表示方向"], [<StyleIc />, true, "表示スタイル"], [<EyeIc />, true, "表示/非表示"],
    [<EditApp />, false, "外観編集"], [<SceneIc />, true, "シーン"], [<Monitor />, true, "表示設定"],
  ];
  return (
    <div className="absolute inset-x-0 top-0.5 flex justify-center pr-1">
      {items.map(([ic, c, label]) => (
        <div key={label} className="flex items-center">
          <button type="button" aria-label={label} className="grid size-[26px] place-items-center">{ic}</button>
          {c && <button type="button" aria-label={`${label} ▾`} className="grid h-[26px] w-3.5 place-items-center"><Caret muted /></button>}
        </div>
      ))}
    </div>
  );
}

function Callout() {
  return (
    <div className="absolute left-[857px] top-[560px] w-[126px]">
      <table className="w-full table-fixed border-collapse border border-black bg-[#f4f4f4] text-[14px] leading-5 text-[#111]">
        <colgroup><col className="w-[69px]" /><col /></colgroup>
        <thead><tr><th colSpan={2} className="h-[30px] p-0 font-normal">第1方向</th></tr></thead>
        <tbody>
          <tr><th className="h-[30px] whitespace-nowrap border-r border-black p-0 pl-2 text-left text-[15px] font-normal">間隔:</th><td className="border-t border-black bg-white p-0 pl-1 text-[13px]">30mm</td></tr>
          <tr><th className="h-[30px] whitespace-nowrap border-r border-black p-0 pl-2 text-left text-[16px] font-normal">ｲﾝｽﾀﾝｽ:</th><td className="bg-white p-0 pl-1 text-[13px]">3</td></tr>
        </tbody>
      </table>
      <div className="absolute -left-[3px] top-[42px] size-[7px] rounded-full border border-[#444] bg-white" />
      <button type="button" aria-label="折りたたむ" className="ml-auto mr-[3px] mt-2 block w-3"><Chevron /></button>
    </div>
  );
}

function TaskPane() {
  const items: [React.ReactNode, string][] = [[<SwIc />, "3DEXPERIENCE"], [<Home />, "リソース"], [<Books />, "デザインライブラリ"], [<Folder />, "ファイルエクスプローラ"], [<Palette />, "パレット表示"], [<Ball />, "外観"], [<PropIc />, "カスタムプロパティ"], [<Forum />, "フォーラム"]];
  return (
    <nav className="absolute right-0 top-[29px] flex w-[29px] flex-col border-l border-t border-[#848484]">
      {items.map(([ic, label], i) => (
        <button key={label} type="button" aria-label={label} className={`flex h-[30px] items-center border-b border-[#848484] pl-1.5 ${i === 0 ? "bg-[#f7f7f7]" : "bg-[#d4d4d4]"}`}>{ic}</button>
      ))}
    </nav>
  );
}

function Viewport() {
  return (
    <main className="relative flex-1">
      <div className="absolute left-1 top-[5px] flex h-6 items-center text-[14px] text-[#111]">
        <svg viewBox="0 0 5 8" className="mr-3 h-2 w-[5px]" aria-hidden="true"><path d="M0 0v8l5-4z" /></svg>
        <TreePartIc />
        <span className="whitespace-pre pl-1">Part2  <span className="text-[15px]">{"(ﾃﾞﾌｫﾙﾄ<<ﾃﾞ..."}</span></span>
      </div>
      <Hud />
      <div className="absolute right-20 top-[35px] opacity-30">
        <svg viewBox="0 0 30 24" className="h-6 w-[30px]"><path d="m1 12 5-5 6 6L24 1l5 5-17 17z" fill="#5fb23b" stroke="#4c9630" /></svg>
      </div>
      <div className="absolute right-[38px] top-[64px] opacity-30">
        <svg viewBox="0 0 26 26" className="size-[26px]"><path d="m1 6 5-5 7 7 7-7 5 5-7 7 7 7-5 5-7-7-7 7-5-5 7-7z" fill="#e85a52" stroke="#b93730" strokeLinejoin="round" /></svg>
      </div>
      <TaskPane />
      <Callout />
      <p className="absolute left-[67px] top-[140px] whitespace-nowrap text-[33px] font-bold leading-10 text-[#ed1c24]">立体のエッジを選択</p>
      <p className="absolute left-[102px] top-[340px] whitespace-nowrap text-[33px] font-bold leading-[66px] text-[#22b14c]">この辺に沿って<br />コピーしてる</p>
    </main>
  );
}

export default function App() {
  return (
    <div className="relative flex min-h-screen flex-col overflow-hidden bg-[linear-gradient(to_bottom,rgba(255,255,255,0)_560px,rgba(253,253,254,0.85)_680px,#fefefe_760px),radial-gradient(ellipse_420px_300px_at_1640px_90px,rgba(246,246,249,0.8)_0%,rgba(246,246,249,0)_100%),radial-gradient(ellipse_1000px_600px_at_270px_0px,#ffffff_0%,#ffffff_66%,#eff0f5_83%,#e0e4ee_97%,#e3e6ef_120%)] font-['Noto_Sans','Noto_Sans_CJK_JP',sans-serif]">
      <Model />
      <div className="relative flex flex-1 flex-col">
        <QuickBar />
        <Ribbon />
        <TabRow />
        <div className="flex flex-1">
          <Panel />
          <Viewport />
        </div>
      </div>
      <Pointers />
    </div>
  );
}
